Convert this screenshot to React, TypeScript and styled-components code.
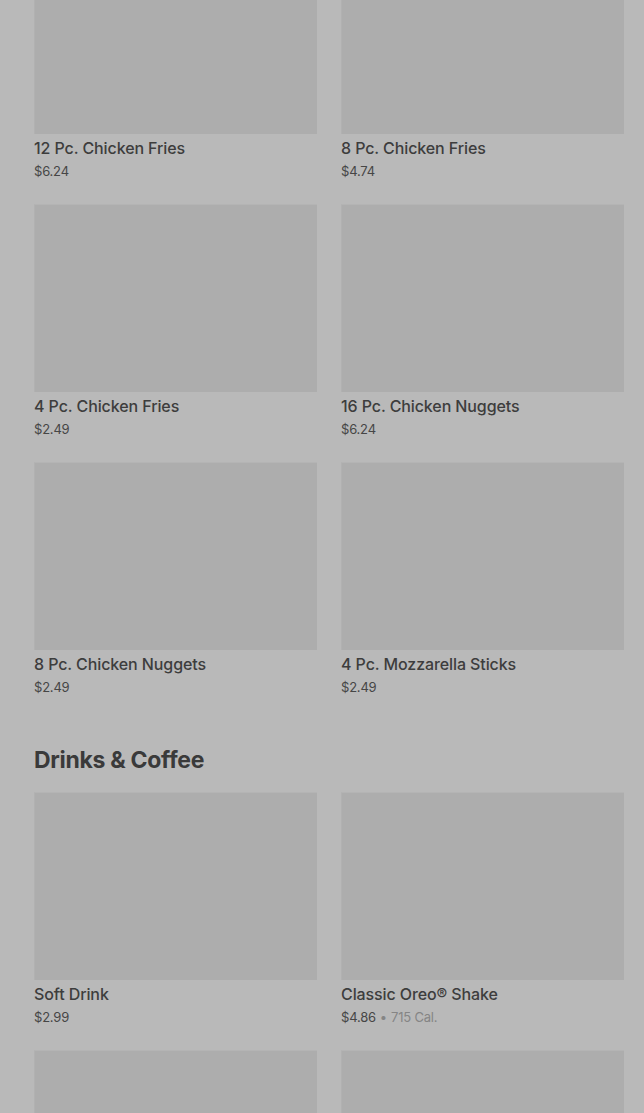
import React from "react";
import styled, { createGlobalStyle } from "styled-components";

const GlobalStyle = createGlobalStyle`
  html, body {
    margin: 0;
    padding: 0;
    background: #b9b9b9;
    font-family: Inter, "Noto Sans", sans-serif;
    overflow: hidden;
  }
`;

const Page = styled.main`
  width: 644px;
  height: 1113px;
  overflow: hidden;
  background: #b9b9b9;
  box-sizing: border-box;
  padding: 0 20px 0 34px;
`;

const Section = styled.section`
  display: flex;
  flex-direction: column;
`;

const Heading = styled.h2`
  margin: 50px 0 18px;
  font-family: Inter, sans-serif;
  font-size: 23px;
  line-height: 28px;
  font-weight: 700;
  letter-spacing: -0.3px;
  color: #3a3a3a;
`;

const Grid = styled.div<{ $offset?: number }>`
  display: grid;
  grid-template-columns: 283px 283px;
  column-gap: 24px;
  row-gap: 24px;
  margin-top: ${(p) => (p.$offset ? `-${p.$offset}px` : "0")};
`;

const Card = styled.div`
  display: flex;
  flex-direction: column;
`;

const Photo = styled.div`
  height: 188px;
  background: #adadad;
  box-sizing: border-box;
  border-top: 1px solid #b4b4b4;
  border-left: 1px solid #b1b1b1;
`;

const Name = styled.div`
  margin-top: 4px;
  font-size: 16px;
  line-height: 20px;
  font-weight: 500;
  letter-spacing: -0.1px;
  color: #3d3d3d;
`;

const Meta = styled.div`
  margin-top: 4px;
  font-size: 13px;
  line-height: 18px;
  letter-spacing: -0.2px;
  color: #464646;
  display: flex;
  align-items: center;
  gap: 4px;
`;

const Cal = styled.span`
  color: #858585;
`;

type Item = { name: string; price: string; cal?: string };

const sides: Item[] = [
  { name: "12 Pc. Chicken Fries", price: "$6.24" },
  { name: "8 Pc. Chicken Fries", price: "$4.74" },
  { name: "4 Pc. Chicken Fries", price: "$2.49" },
  { name: "16 Pc. Chicken Nuggets", price: "$6.24" },
  { name: "8 Pc. Chicken Nuggets", price: "$2.49" },
  { name: "4 Pc. Mozzarella Sticks", price: "$2.49" },
];

const drinks: Item[] = [
  { name: "Soft Drink", price: "$2.99" },
  { name: "Classic Oreo® Shake", price: "$4.86", cal: "715 Cal." },
];

const MenuCard: React.FC<{ item: Item }> = ({ item }) => (
  <Card>
    <Photo />
    <Name>{item.name}</Name>
    <Meta>
      {item.price}
      {item.cal && (
        <>
          <Cal>•</Cal>
          <Cal>{item.cal}</Cal>
        </>
      )}
    </Meta>
  </Card>
);

const App: React.FC = () => (
  <>
    <GlobalStyle />
    <Page>
      <Section>
        <Grid $offset={54}>
          {sides.map((it) => (
            <MenuCard key={it.name} item={it} />
          ))}
        </Grid>
      </Section>
      <Section>
        <Heading>Drinks &amp; Coffee</Heading>
        <Grid>
          {drinks.map((it) => (
            <MenuCard key={it.name} item={it} />
          ))}
          <Photo />
          <Photo />
        </Grid>
      </Section>
    </Page>
  </>
);

export default App;
